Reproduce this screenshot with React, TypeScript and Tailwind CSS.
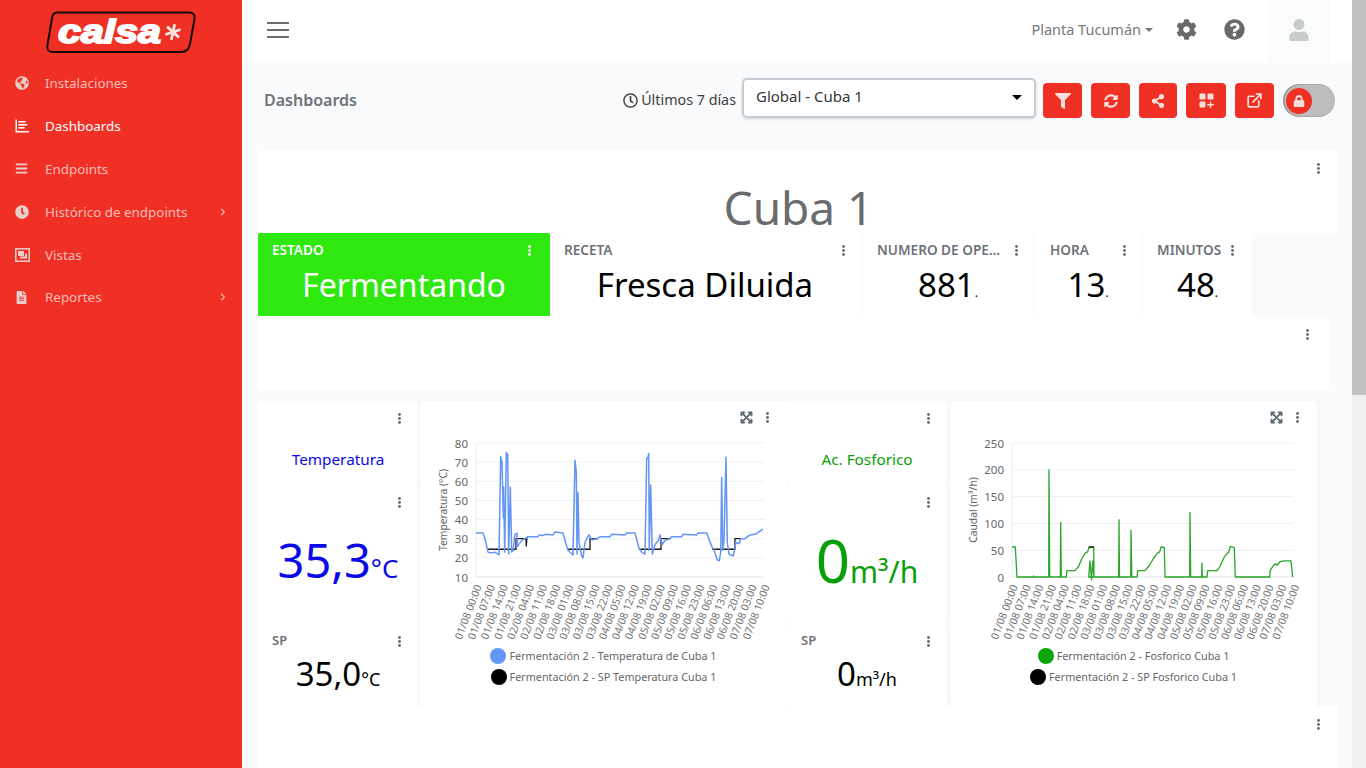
import React from "react";
import { ExternalLink } from "lucide-react";
import { FaGlobeAmericas, FaBars, FaClock, FaRegClock, FaFileAlt, FaFilter, FaSyncAlt, FaShareAlt, FaLock, FaCog, FaQuestionCircle, FaUser, FaChevronRight, FaExpandArrowsAlt } from "react-icons/fa";

const FONT = "font-['Noto_Sans','Liberation_Sans',sans-serif]";

function DashIcon() {
  return (
    <svg width="14" height="14" viewBox="0 0 14 14" fill="#fff">
      <path d="M0.500 0.500h1.500v11.500h12v1.500H0.500z" />
      <rect x="3.500" y="2" width="7" height="1.600" />
      <rect x="3.500" y="5" width="9" height="1.600" />
      <rect x="3.500" y="8" width="6" height="1.600" />
    </svg>
  );
}

function VistasIcon() {
  return (
    <svg width="15" height="14" viewBox="0 0 15 14" fill="none">
      <rect x="0.800" y="0.800" width="13.400" height="12.400" stroke="#e8cfcc" strokeWidth="1.500" />
      <rect x="3" y="3" width="6" height="5" fill="#e8cfcc" />
      <path d="M5 10.500h7V5.500h-2V8.500H5z" fill="#e8cfcc" />
    </svg>
  );
}

const nav = [
  { label: "Instalaciones", icon: <FaGlobeAmericas className="text-[14px]" /> },
  { label: "Dashboards", icon: <DashIcon />, active: true },
  { label: "Endpoints", icon: <FaBars className="text-[13px]" /> },
  { label: "Histórico de endpoints", icon: <FaClock className="text-[14px]" />, chev: true },
  { label: "Vistas", icon: <VistasIcon /> },
  { label: "Reportes", icon: <FaFileAlt className="text-[13px]" />, chev: true },
];

function Logo() {
  const spokes = [0, 60, 120];
  return (
    <svg width="152" height="43" viewBox="0 0 152 43" aria-label="calsa">
      <path d="M12 1.500H144Q150.500 1.500 149.500 8L145 33Q143.500 41 136 41H8Q1 41 2.500 34L7 7Q8 1.500 12 1.500Z" fill="#ef3024" stroke="#1a0b0a" strokeWidth="2" />
      <text x="13" y="32" fontFamily="Liberation Sans, sans-serif" fontWeight="700" fontStyle="italic" fontSize="33" fill="#fff" stroke="#fff" strokeWidth="1.800" textLength="103" lengthAdjust="spacingAndGlyphs">calsa</text>
      {spokes.map((a) => (
        <line key={a} x1="128" y1="13" x2="128" y2="29" stroke="#ffe6e2" strokeWidth="2.800" transform={`rotate(${a + 12} 128 21)`} />
      ))}
    </svg>
  );
}

function Kebab({ className = "", color = "#5f6b72" }: { className?: string; color?: string }) {
  return (
    <svg width="3" height="11" viewBox="0 0 3 11" className={"shrink-0 " + className} fill={color}>
      <circle cx="1.500" cy="1.500" r="1.400" />
      <circle cx="1.500" cy="5.500" r="1.400" />
      <circle cx="1.500" cy="9.500" r="1.400" />
    </svg>
  );
}

function ActionBtn({ w, children }: { w: string; children: React.ReactNode }) {
  return <button className={`${w} flex h-[35px] items-center justify-center rounded-[4px] bg-[#f03024] text-white`}>{children}</button>;
}

function Stat({ w, pr, title, value, first }: { w: string; pr: string; title: string; value: string; first?: boolean }) {
  const isText = first || title === "RECETA";
  return (
    <div className={`${w} h-[83px] shrink-0 rounded-t-[2px] ${first ? "bg-[#2ee80f]" : "bg-white"}`}>
      <div className={`flex items-center justify-between pl-[14px] ${pr} pt-[9px] text-[13.600px] font-semibold leading-[16px] ${first ? "text-white" : "text-[#6c7378]"}`}>
        <span>{title}</span>
        <Kebab color={first ? "#ffffff" : "#5f6b72"} />
      </div>
      <div className={`mt-[5px] text-center leading-[44px] ${first ? "text-[32px] text-white" : "text-[33px] text-black"}`}>
        {value}
        {!isText && <span className="text-[12px]">.</span>}
      </div>
    </div>
  );
}

const tempBlue: [number, number][] = [
  [0,33],[7,33],[9,30],[12,23],[15,22.500],[19,23],[23,21.500],[24.700,73],[26,70],[27.300,41],[27.600,57],[28.700,23],[30.300,75],[31.700,74],[32.700,22],[34.300,57],[35.700,23],[37.300,24],[38.700,32],[41,33],[41.300,26],[45.700,29],[49,30],[52,31],[62,31],[63,32],[66,31.700],[70,32.300],[77,32],[79,33.500],[87,33],[90.700,26],[92,24],[97,21.500],[99,71],[100.300,65],[101,22],[102,54],[103,28],[105.700,21],[107,20],[109,28],[111.700,31],[113,32],[115.700,29.500],[120.700,30],[124,31],[134,31],[135.700,32.300],[149,32],[150.700,33],[159,33],[163,25],[165.700,23],[169,22],[170.700,72],[171.700,72],[172.700,74.500],[173.300,24],[174.700,58],[176.300,22],[179,27],[182.300,29],[184,32],[186.300,27],[189,29],[193.700,30],[195.700,31],[205.700,31],[207,32.300],[220.700,32],[222,33],[230.700,33],[235.700,26],[238,24],[241.300,19],[243.300,18.500],[244.700,23],[245.700,62],[246.700,24],[248,29],[250,72.500],[251.300,28],[253,22],[257.300,21],[260,28],[263.300,27.500],[264.700,30],[269,30],[274,32],[280,32.500],[284,34],[287,35],
];
const tempBlack: [number, number][][] = [
  [[11,24.500],[40,24.500],[40,30],[50,30],[50.300,26],[51,31]],
  [[92,24.500],[114,24.500],[114,30],[122,30]],
  [[163,24.500],[185,24.500],[185,30],[195,30]],
  [[236,24.500],[259,24.500],[259,30],[265,30]],
];
const ty = (v: number) => (80 - v) * (134 / 70);

const flowGreen: [number, number][] = [
  [0,56],[3.300,56],[5,0],[21.500,0],[21.700,2],[22,0],[36.700,0],[37,200],[37.700,0],[48.300,0],[48.700,102],[49.300,0],[54.300,0],[55,12],[63,12],[66.700,20],[70,35],[73.300,45],[75.700,47],[77,55],[81.700,56],[82,0],[80.800,30],[79.500,-5],[78,30],[76.700,0],[106.700,0],[107,107],[107.500,0],[118.700,0],[119,87],[119.800,0],[125,0],[125.700,12],[133,12],[136.700,20],[141.700,35],[145.700,45],[147.700,47],[149,56],[152.300,55],[153,0],[177.700,0],[178,120],[178.700,0],[189.700,0],[190,26],[190.300,0],[195,0],[195.700,12],[205,12],[208,20],[211.700,35],[215,44],[216.700,46],[218.300,57],[222.300,55],[223.300,0],[257.700,0],[258.300,13],[261,20],[263.300,25],[265,22],[267.700,28],[271.700,30],[279,30],[280.700,0],
];
const fy = (v: number) => ((250 - v) / 250) * 134;

const labels = ["01/08 00:00","01/08 07:00","01/08 14:00","01/08 21:00","02/08 04:00","02/08 11:00","02/08 18:00","03/08 01:00","03/08 08:00","03/08 15:00","03/08 22:00","04/08 05:00","04/08 12:00","04/08 19:00","05/08 02:00","05/08 09:00","05/08 16:00","05/08 23:00","06/08 06:00","06/08 13:00","06/08 20:00","07/08 03:00","07/08 10:00"];

const pts = (arr: [number, number][], f: (v: number) => number) => arr.map(([x, v]) => `${x},${f(v)}`).join(" ");

function Chart({ kind }: { kind: "temp" | "flow" }) {
  const isT = kind === "temp";
  const ticks = isT ? [80, 70, 60, 50, 40, 30, 20, 10] : [250, 200, 150, 100, 50, 0];
  const plotW = isT ? 288 : 281.500;
  const left = isT ? 56 : 62;
  const step = plotW / 22;
  const legends = isT
    ? [["#6495f5", "Fermentación 2 - Temperatura de Cuba 1"], ["#000", "Fermentación 2 - SP Temperatura Cuba 1"]]
    : [["#0ca50c", "Fermentación 2 - Fosforico Cuba 1"], ["#000", "Fermentación 2 - SP Fosforico Cuba 1"]];
  return (
    <div className="h-[305px] w-[367px] shrink-0 rounded-[4px] bg-white shadow-[0_0_6px_rgba(0,0,0,0.03)]">
      <div className="flex h-[32px] items-center justify-end gap-[13px] pr-[18.500px] pt-[1px]">
        <FaExpandArrowsAlt className="text-[13px] text-[#5f6b72]" stroke="currentColor" strokeWidth={24} />
        <Kebab />
      </div>
      <svg width="367" height="210" className="block" viewBox="0 0 367 210" fontFamily="Noto Sans, sans-serif">
        <g transform="translate(0,10)">
          {ticks.map((t, i) => {
            const y = (i * 134) / (ticks.length - 1);
            return (
              <g key={t}>
                <line x1={left} x2={left + plotW} y1={y} y2={y} stroke={i === ticks.length - 1 ? "#dfe1e4" : "#eef0f2"} />
                <text x={left - 8} y={y + 4.500} textAnchor="end" fontSize="11.500" fill="#666">{t}</text>
              </g>
            );
          })}
          <line x1={left} x2={left} y1="0" y2="134" stroke="#eceef0" />
          <text transform="translate(27,67) rotate(-90)" textAnchor="middle" fontSize="10.300" fill="#666">{isT ? "Temperatura (°C)" : "Caudal (m³/h)"}</text>
          <g transform={`translate(${left},0)`}>
            {isT ? (
              <>
                {tempBlack.map((seg, i) => (
                  <polyline key={i} fill="none" stroke="#1a1a1a" strokeWidth="1.300" points={pts(seg, ty)} />
                ))}
                <polyline fill="none" stroke="#6495f5" strokeWidth="1.500" strokeLinejoin="round" points={pts(tempBlue, ty)} />
              </>
            ) : (
              <>
                <polyline fill="none" stroke="#2aa52a" strokeWidth="1.300" strokeLinejoin="round" points={pts(flowGreen, fy)} />
                <line x1="76.500" x2="82" y1={fy(56)} y2={fy(56)} stroke="#1a1a1a" strokeWidth="1.300" />
              </>
            )}
          </g>
          {labels.map((l, i) => {
            const x = left + i * step;
            return (
              <text key={l} transform={`translate(${x + 6},143.500) rotate(-69)`} textAnchor="end" fontSize="10.500" fill="#737373">{l}</text>
            );
          })}
        </g>
      </svg>
      <div className="mt-[5px] flex flex-col items-center gap-[5px] text-[10.800px] leading-[16px] text-[#666]">
        {legends.map(([c, t]) => (
          <div key={t} className="flex items-center gap-[3px]">
            <span className="h-[16px] w-[16px] rounded-full" style={{ background: c }} />
            <span>{t}</span>
          </div>
        ))}
      </div>
    </div>
  );
}

function Widget({ h, title, children }: { h: string; title?: string; children: React.ReactNode }) {
  return (
    <div className={`${h} w-full rounded-[4px] bg-white`}>
      <div className="flex h-[24px] items-center justify-between pl-[14px] pr-[17px] pt-[10px] text-[13px] font-semibold text-[#6c7378]">
        <span>{title}</span>
        <Kebab />
      </div>
      {children}
    </div>
  );
}

function Column({ name, color, value, unit, sp, spUnit, valueSize, unitSize }: { name: string; color: string; value: string; unit: string; sp: string; spUnit: string; valueSize: string; unitSize: string }) {
  return (
    <div className="flex h-[305px] w-[160px] shrink-0 flex-col">
      <Widget h="h-[84px]">
        <div className="mt-[24px] text-center text-[15.300px] leading-[20px]" style={{ color }}>{name}</div>
      </Widget>
      <Widget h="h-[139px]">
        <div className={`mt-[21px] text-center leading-[60px] ${valueSize}`} style={{ color }}>
          {value}<span className={unitSize}>{unit}</span>
        </div>
      </Widget>
      <Widget h="h-[82px]" title="SP">
        <div className="mt-[4px] text-center text-[33px] leading-[44px] text-black">
          {sp}<span className="text-[18px]">{spUnit}</span>
        </div>
      </Widget>
    </div>
  );
}

export default function App() {
  return (
    <div className={`flex h-[768px] w-[1366px] overflow-hidden bg-[#f9fafc] ${FONT}`}>
      <aside className="flex h-full w-[242px] shrink-0 flex-col bg-[#f03024]">
        <div className="flex h-[62px] items-start justify-center pr-[1px] pt-[11px]"><Logo /></div>
        <nav className="flex flex-col">
          {nav.map((n) => (
            <div key={n.label} className={`flex h-[42.800px] items-center pl-[15px] pr-[15px] text-[13.400px] ${n.active ? "text-white" : "text-[#f6bdb7]"}`}>
              <span className={`flex w-[30px] items-center ${n.active ? "text-white" : "text-[#e8cfcc]"}`}>{n.icon}</span>
              <span className="flex-1">{n.label}</span>
              {n.chev && <FaChevronRight className="text-[8px]" />}
            </div>
          ))}
        </nav>
      </aside>

      <div className="flex min-w-0 flex-1">
        <main className="flex w-[1110px] shrink-0 flex-col">
          <header className="flex h-[63px] shrink-0 items-center bg-white pr-[22px]">
            <div className="ml-[25px] mb-[4px] flex w-[22px] flex-col gap-[5px]">
              <span className="h-[2px] bg-[#6b6f72]" />
              <span className="h-[2px] bg-[#6b6f72]" />
              <span className="h-[2px] bg-[#6b6f72]" />
            </div>
            <div className="ml-auto flex h-full items-center">
              <div className="flex items-center pb-[4px]">
                <span className="text-[14.500px] text-[#74797d]">Planta Tucumán</span>
                <span className="ml-[4px] h-0 w-0 border-x-[4px] border-t-[4px] border-x-transparent border-t-[#74797d]" />
                <FaCog className="ml-[23px] text-[21px] text-[#6a6a6a]" />
                <FaQuestionCircle className="ml-[27px] text-[21px] text-[#6a6a6a]" />
              </div>
              <div className="ml-[23px] flex h-full w-[62px] items-center justify-center bg-[#fafbfc] pb-[4px]">
                <FaUser className="text-[22px] text-[#c9cccd]" />
              </div>
            </div>
          </header>

          <div className="flex h-[87px] shrink-0 items-center pb-[12px] pl-[22px] pr-[17px]">
            <h1 className="-mt-[2px] text-[16px] font-semibold text-[#6c7378]">Dashboards</h1>
            <div className="ml-auto flex items-center">
              <FaRegClock className="text-[15px] text-[#3d3f41]" />
              <span className="-mt-[2px] ml-[3px] text-[14.300px] text-[#3d3f41]">Últimos 7 días</span>
              <div className="-mt-[6px] ml-[6px] mr-[7px] flex h-[40px] w-[294px] items-center justify-between rounded-[5px] border-2 border-[#c6ccd3] bg-white pl-[12px] pr-[12px] text-[15px] text-[#33373a] shadow-[0_1px_3px_rgba(0,0,0,0.15)]">
                <span className="-mt-[2px]">Global - Cuba 1</span>
                <span className="h-0 w-0 border-x-[5px] border-t-[5px] border-x-transparent border-t-black" />
              </div>
              <div className="flex items-center gap-[9px]">
                <ActionBtn w="w-[39px]"><FaFilter className="text-[16px] text-[#f7e0dc]" /></ActionBtn>
                <ActionBtn w="w-[39px]"><FaSyncAlt className="text-[14px] text-[#f7e0dc]" /></ActionBtn>
                <ActionBtn w="w-[38px]"><FaShareAlt className="text-[14px] text-[#f7e0dc]" /></ActionBtn>
                <ActionBtn w="w-[40px]">
                  <svg width="15" height="15" viewBox="0 0 15 15" fill="#f7e0dc"><rect x="0.500" y="0.500" width="6" height="6" rx="1.200" /><rect x="8.500" y="0.500" width="6" height="6" rx="1.200" /><rect x="0.500" y="8.500" width="6" height="6" rx="1.200" /><path d="M11.500 8.500v6.500M8.300 11.750H14.800" stroke="#f7e0dc" strokeWidth="1.400" /></svg>
                </ActionBtn>
                <ActionBtn w="w-[39px]"><ExternalLink size={17} strokeWidth={2.400} className="text-[#f7e0dc]" /></ActionBtn>
              </div>
              <div className="ml-[9px] flex h-[33px] w-[52px] items-center rounded-full bg-[#bdbdbd] pl-[3px] shadow-[inset_1px_0_2px_rgba(0,0,0,0.35)]">
                <span className="flex h-[26px] w-[26px] items-center justify-center rounded-full bg-[#f03024] text-[12px] text-[#f7e0dc]"><FaLock /></span>
              </div>
            </div>
          </div>

          <div className="flex flex-col pl-[16px]">
            <section className="relative ml-[1px] flex h-[83px] w-[1079px] items-end justify-center rounded-[4px] bg-white">
              <Kebab className="absolute right-[18px] top-[13px]" />
              <div className="-mb-[3px] text-[46px] leading-[58px] text-[#6a6b6d]">Cuba 1</div>
            </section>

            <section className="flex h-[83px] items-start">
              <Stat first w="w-[292px]" pr="pr-[19.500px]" title="ESTADO" value="Fermentando" />
              <Stat w="w-[310px]" pr="pr-[15.500px]" title="RECETA" value="Fresca Diluida" />
              <div className="h-[83px] w-[3px] bg-[#fcfcfd]" />
              <Stat w="w-[170px]" pr="pr-[15.500px]" title="NUMERO DE OPE..." value="881" />
              <div className="h-[83px] w-[3px] bg-[#fcfcfd]" />
              <Stat w="w-[104px]" pr="pr-[14.500px]" title="HORA" value="13" />
              <div className="h-[83px] w-[3px] bg-[#fcfcfd]" />
              <Stat w="w-[109px]" pr="pr-[18.500px]" title="MINUTOS" value="48" />
            </section>

            <section className="relative h-[74px] w-[1071px] bg-white">
              <Kebab className="absolute right-[20px] top-[13px]" />
            </section>

            <section className="mt-[11px] flex h-[305px]">
              <Column name="Temperatura" color="#0a0ae6" value="35,3" unit="°C" sp="35,0" spUnit="°C" valueSize="text-[47px]" unitSize="text-[26px]" />
              <div className="w-[2px]" />
              <Chart kind="temp" />
              <Column name="Ac. Fosforico" color="#0a9e0a" value="0" unit="m³/h" sp="0" spUnit="m³/h" valueSize="text-[60px]" unitSize="text-[30px]" />
              <div className="w-[3px]" />
              <Chart kind="flow" />
            </section>

            <section className="relative h-[80px] w-[1080px] bg-white">
              <Kebab className="absolute right-[18.500px] top-[13px]" />
            </section>
          </div>
        </main>
        <div className="flex w-[14px] shrink-0 flex-col bg-[#f1f1f1]">
          <div className="h-[395px] bg-[#c1c1c1]" />
        </div>
      </div>
    </div>
  );
}
